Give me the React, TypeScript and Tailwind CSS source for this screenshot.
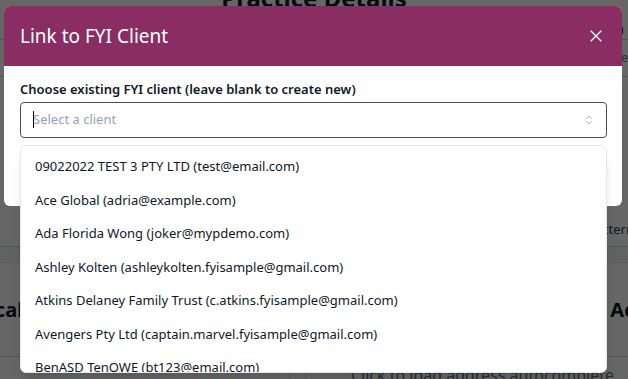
import { X, ChevronsUpDown } from 'lucide-react';

const clients = [
  '09022022 TEST 3 PTY LTD (test@email.com)',
  'Ace Global (adria@example.com)',
  'Ada Florida Wong (joker@mypdemo.com)',
  'Ashley Kolten (ashleykolten.fyisample@gmail.com)',
  'Atkins Delaney Family Trust (c.atkins.fyisample@gmail.com)',
  'Avengers Pty Ltd (captain.marvel.fyisample@gmail.com)',
  'BenASD TenQWE (bt123@email.com)',
];

function BackgroundPage() {
  return (
    <div className="flex flex-col h-full bg-white text-gray-900">
      <div className="h-[8px] shrink-0 overflow-visible flex justify-center">
        <h1 className="text-[24px] font-bold leading-none -mt-[14px]">Practice Details</h1>
      </div>
      <div className="h-[32px] shrink-0 flex items-end justify-between px-1 border-b border-gray-300">
        <span className="text-[13px] text-gray-500">s)</span>
        <span className="text-[14px] font-semibold">a</span>
      </div>
      <div className="h-[37px] shrink-0 flex items-center justify-end border-b border-gray-300">
        <span className="text-[13px] text-gray-500">e</span>
      </div>
      <div className="h-[137px] shrink-0" />
      <div className="h-[33px] shrink-0 flex items-center justify-end border-b border-gray-300">
        <span className="text-[13px] text-gray-700 -mr-[6px]">pattern</span>
      </div>
      <div className="h-[16px] shrink-0 bg-gray-100 border-b border-gray-200" />
      <div className="h-[94px] shrink-0 flex items-center justify-between border-b border-gray-300">
        <span className="text-[20px] font-bold -ml-[58px]">Physical</span>
        <span className="text-[20px] font-bold -mr-[62px]">Address</span>
      </div>
      <div className="flex items-start pl-[289px] gap-[15px]">
        <div className="w-[1px] h-[30px] bg-gray-300" />
        <div className="w-[1px] h-[30px] bg-gray-300" />
        <span className="text-[16px] text-gray-500 mt-[6px] pl-[30px]">Click to load address autocomplete</span>
      </div>
    </div>
  );
}

export default function App() {
  return (
    <div
      className="relative w-[628px] h-[379px] overflow-hidden"
      style={{ fontFamily: '"Noto Sans", "Open Sans", sans-serif' }}
    >
      <BackgroundPage />

      {/* Overlay */}
      <div className="absolute inset-0 bg-black/60" />

      {/* Modal */}
      <div className="absolute left-[4px] top-[6px] w-[618px] rounded-md bg-white">
        <div className="h-[60px] bg-[#8a2d63] rounded-t-md flex items-center justify-between pl-[16px] pr-[16px]">
          <span className="text-white text-[19px]">Link to FYI Client</span>
          <X className="w-[20px] h-[20px] text-white" strokeWidth={1.5} />
        </div>
        <div className="pl-[16px] pr-[15px] pt-[14px] pb-[68px]">
          <label className="block text-[13px] font-semibold text-gray-900 mb-[2px]">
            Choose existing FYI client (leave blank to create new)
          </label>
          <div className="h-[36px] border border-[#4b4b55] rounded-[4px] flex items-center pl-[12px] pr-[11px]">
            <span className="w-[1px] h-[17px] bg-black -mr-[1px]" />
            <span className="flex-1 text-[13px] text-gray-400">Select a client</span>
            <ChevronsUpDown className="w-[12px] h-[12px] text-gray-400" strokeWidth={1.5} />
          </div>
        </div>
      </div>

      {/* Dropdown list */}
      <div className="absolute left-[20px] top-[145px] w-[587px] h-[228px] overflow-hidden bg-white border border-gray-200 rounded-md shadow-lg pt-[4px]">
        {clients.map((c) => (
          <div key={c} className="h-[33.5px] flex items-center pl-[14px] text-[13px] text-gray-900">
            {c}
          </div>
        ))}
      </div>
    </div>
  );
}
